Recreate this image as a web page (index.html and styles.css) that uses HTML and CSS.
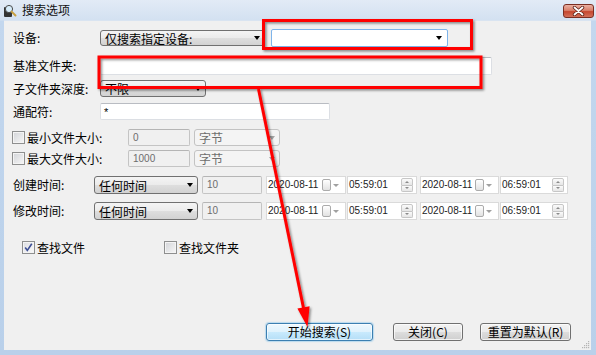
FILE: index.html
```html
<!DOCTYPE html>
<html>
<head>
<meta charset="utf-8">
<link rel="stylesheet" href="styles.css">
</head>
<body>
<div class="window">
  <div class="titlebar">
    <svg class="app-icon" width="14" height="15" viewBox="0 0 14 15">
      <rect x="1" y="4" width="8" height="10" rx="1" fill="#333"/>
      <circle cx="6" cy="6" r="3.6" fill="#d6ecfa" stroke="#4a4a4a" stroke-width="1"/>
      <line x1="8.6" y1="8.6" x2="12.5" y2="12.5" stroke="#c8a040" stroke-width="2" stroke-linecap="round"/>
    </svg>
    <span class="title">搜索选项</span>
    <div class="close">
      <svg width="13" height="10" viewBox="0 0 13 10">
        <path d="M2.5 1.5 L10.5 8.5 M10.5 1.5 L2.5 8.5" stroke="#5a2118" stroke-width="3.4" stroke-linecap="round"/>
        <path d="M2.5 1.5 L10.5 8.5 M10.5 1.5 L2.5 8.5" stroke="#fff" stroke-width="1.8" stroke-linecap="round"/>
      </svg>
    </div>
  </div>

  <div class="client">
    <div class="row r1">
      <span class="lbl lw87">设备:</span>
      <div class="dd dd-dev"><span>仅搜索指定设备:</span><i class="arr"></i></div>
      <div class="combo"><i class="arr"></i></div>
    </div>

    <div class="row r2">
      <span class="lbl lw87">基准文件夹:</span>
      <div class="edit w392"></div>
    </div>

    <div class="row r3">
      <span class="lbl lw87">子文件夹深度:</span>
      <div class="dd w106"><span>不限</span><i class="arr"></i></div>
    </div>

    <div class="row r4">
      <span class="lbl lw87">通配符:</span>
      <div class="edit w230 star">*</div>
    </div>

    <div class="row r5">
      <span class="cb"></span>
      <span class="lbl lw101 cbl">最小文件大小:</span>
      <div class="edit dis w62">0</div>
      <div class="dd dis w86 ml4"><span>字节</span><i class="arr"></i></div>
    </div>

    <div class="row r6">
      <span class="cb"></span>
      <span class="lbl lw101 cbl">最大文件大小:</span>
      <div class="edit dis w62">1000</div>
      <div class="dd dis w86 ml4"><span>字节</span><i class="arr"></i></div>
    </div>

    <div class="row r7">
      <span class="lbl lw81">创建时间:</span>
      <div class="dd w104 tall"><span>任何时间</span><i class="arr"></i></div>
      <div class="edit dis w60 ml4">10</div>
      <div class="dt w80 ml4"><span class="v">2020-08-11</span><span class="cal"></span><i class="sarr"></i></div>
      <div class="tm w70 ml1"><span class="v">05:59:01</span><span class="spin"><i class="sp up"></i><i class="sp dn"></i></span></div>
      <div class="dt w79 ml3"><span class="v">2020-08-11</span><span class="cal"></span><i class="sarr"></i></div>
      <div class="tm w68 ml1"><span class="v">06:59:01</span><span class="spin"><i class="sp up"></i><i class="sp dn"></i></span></div>
    </div>

    <div class="row r8">
      <span class="lbl lw81">修改时间:</span>
      <div class="dd w104 tall"><span>任何时间</span><i class="arr"></i></div>
      <div class="edit dis w60 ml4">10</div>
      <div class="dt w80 ml4"><span class="v">2020-08-11</span><span class="cal"></span><i class="sarr"></i></div>
      <div class="tm w70 ml1"><span class="v">05:59:01</span><span class="spin"><i class="sp up"></i><i class="sp dn"></i></span></div>
      <div class="dt w79 ml3"><span class="v">2020-08-11</span><span class="cal"></span><i class="sarr"></i></div>
      <div class="tm w68 ml1"><span class="v">06:59:01</span><span class="spin"><i class="sp up"></i><i class="sp dn"></i></span></div>
    </div>

    <div class="row r9">
      <div class="chk grp1">
        <span class="cb checked">
          <svg width="11" height="11" viewBox="0 0 11 11"><path d="M2.2 5.6 L4.3 8.4 L8.8 1.8" fill="none" stroke="#3d4f95" stroke-width="1.6"/></svg>
        </span>
        <span class="lbl cbl">查找文件</span>
      </div>
      <div class="chk">
        <span class="cb"></span>
        <span class="lbl cbl">查找文件夹</span>
      </div>
    </div>

    <div class="row btnrow">
      <div class="btn def w107">开始搜索(S)</div>
      <div class="btn w70 ml20">关闭(C)</div>
      <div class="btn w91 ml17">重置为默认(R)</div>
    </div>

    <svg class="grip" width="9" height="9" viewBox="0 0 9 9">
      <g fill="#b5b5b5">
        <rect x="7" y="1" width="1.2" height="1.2"/>
        <rect x="5" y="3" width="1.2" height="1.2"/><rect x="7" y="3" width="1.2" height="1.2"/>
        <rect x="3" y="5" width="1.2" height="1.2"/><rect x="5" y="5" width="1.2" height="1.2"/><rect x="7" y="5" width="1.2" height="1.2"/>
        <rect x="1" y="7" width="1.2" height="1.2"/><rect x="3" y="7" width="1.2" height="1.2"/><rect x="5" y="7" width="1.2" height="1.2"/><rect x="7" y="7" width="1.2" height="1.2"/>
      </g>
    </svg>
  </div>

  <svg class="annot" width="596" height="355" viewBox="0 0 596 355">
    <defs>
      <filter id="sh" x="-10%" y="-10%" width="120%" height="120%">
        <feDropShadow dx="1.5" dy="1.5" stdDeviation="1" flood-color="#000" flood-opacity="0.45"/>
      </filter>
    </defs>
    <g filter="url(#sh)">
      <rect x="263.5" y="20.5" width="208" height="28" fill="none" stroke="#ff0000" stroke-width="3"/>
      <rect x="99" y="57" width="382" height="30.5" fill="none" stroke="#ff0000" stroke-width="3"/>
      <line x1="258.5" y1="89" x2="303.5" y2="308" stroke="#ff0000" stroke-width="3"/>
      <polygon points="307.5,327 309.6,306.2 297.4,308.6" fill="#ff0000"/>
    </g>
  </svg>
</div>
</body>
</html>
```

FILE: styles.css
```css
* { box-sizing: border-box; }
html, body { margin: 0; padding: 0; }
body {
  width: 596px;
  height: 355px;
  overflow: hidden;
  background: #bdd3ec;
  font-family: "Liberation Sans", "Noto Sans CJK SC", sans-serif;
  font-size: 12px;
  color: #000;
}
.window {
  position: relative;
  width: 596px;
  height: 355px;
  display: flex;
  flex-direction: column;
  background: linear-gradient(180deg, #e2ebf6 0px, #d3e1f1 20px, #c3d7ee 21px, #b9d0ea 100%);
}
.titlebar {
  height: 20px;
  display: flex;
  align-items: flex-start;
  padding-left: 3px;
  flex: none;
}
.app-icon { margin-top: 3px; }
.title {
  margin-left: 5px;
  margin-top: 2px;
  font-family: "Noto Sans CJK SC", sans-serif;
  font-size: 12px;
  line-height: 16px;
  color: #111;
}
.close {
  margin-left: auto;
  margin-right: 2px;
  margin-top: 4px;
  width: 31px;
  height: 14px;
  border: 1px solid #7a2e22;
  border-radius: 3px;
  background: linear-gradient(180deg, #eab0a2 0%, #d9806b 45%, #c6472f 55%, #d2705a 100%);
  display: flex;
  align-items: center;
  justify-content: center;
}
.client {
  flex: 1;
  margin: 0 5px 5px 4px;
  background: #f0f0f0;
  position: relative;
  display: flex;
  flex-direction: column;
  border-top: 1px solid #d9e4f1;
}
.row {
  display: flex;
  align-items: center;
  height: 18px;
  padding-left: 9px;
  flex: none;
}
.r1 { margin-top: 8px; }
.r2 { margin-top: 10px; }
.r3 { margin-top: 5px; height: 17px; }
.r4 { margin-top: 6px; height: 17px; }
.r5 { margin-top: 9px; height: 17px; padding-left: 8px; }
.r6 { margin-top: 4px; height: 17px; padding-left: 8px; }
.r7 { margin-top: 9px; }
.r8 { margin-top: 8px; }
.r9 { margin-top: 21px; height: 13px; padding-left: 18px; }
.btnrow { margin-top: 69px; height: 18px; padding-left: 262px; }

.lbl {
  white-space: nowrap;
  font-family: "Noto Sans CJK SC", sans-serif;
  font-size: 12px;
  line-height: 16px;
}
.lw87 { width: 87px; flex: none; }
.lw81 { width: 81px; flex: none; }
.lw101 { width: 101px; flex: none; }
.cbl { margin-left: 2px; }

.w60 { width: 60px; } .w62 { width: 62px; } .w68 { width: 68px; } .w70 { width: 70px; }
.w79 { width: 79px; } .w80 { width: 80px; } .w86 { width: 86px; } .w91 { width: 91px; }
.w104 { width: 104px; } .w106 { width: 106px; } .w107 { width: 107px; }
.w230 { width: 230px; } .w392 { width: 392px; }
.ml1 { margin-left: 1px; } .ml3 { margin-left: 3px; } .ml4 { margin-left: 4px; }
.ml17 { margin-left: 17px; } .ml20 { margin-left: 20px; }

.dd {
  flex: none;
  height: 17px;
  border: 1px solid #707070;
  border-radius: 3px;
  background: linear-gradient(180deg, #f4f4f4 0%, #ebebeb 50%, #dedede 51%, #d2d2d2 100%);
  display: flex;
  align-items: center;
  justify-content: space-between;
  padding: 0 4px 0 4px;
  font-family: "Noto Sans CJK SC", sans-serif;
  font-size: 12px;
  line-height: 15px;
  white-space: nowrap;
}
.dd-dev { width: 165px; height: 16px; }
.dd.tall { height: 18px; }
.arr {
  display: block;
  width: 0;
  height: 0;
  border-left: 3.5px solid transparent;
  border-right: 3.5px solid transparent;
  border-top: 4px solid #000;
}
.dd.dis {
  background: #f4f4f4;
  border-color: #c3c3c3;
  color: #6d6d6d;
}
.dd.dis .arr { border-top-color: #a5a5a5; }

.combo {
  flex: none;
  width: 177px;
  height: 18px;
  margin-left: 6px;
  background: #fff;
  border: 1px solid #7eb4ea;
  border-radius: 2px;
  display: flex;
  align-items: center;
  justify-content: flex-end;
  padding-right: 5px;
}
.edit {
  flex: none;
  height: 18px;
  background: #fff;
  border: 1px solid #dcdfe4;
  border-top-color: #b9bcc2;
  border-radius: 2px;
  font-size: 10px;
  line-height: 16px;
  padding-left: 4px;
}
.r4 .edit { height: 17px; }
.star { padding-left: 3px; font-size: 11px; line-height: 17px; }
.edit.dis {
  background: #f0f0f0;
  color: #6d6d6d;
  border-color: #c4c4c4;
  border-top-color: #b5b5b5;
}
.r5 .edit, .r6 .edit { height: 17px; }
.r5 .dd, .r6 .dd { height: 17px; }

.dt, .tm {
  flex: none;
  height: 18px;
  background: #fff;
  border: 1px solid #dadada;
  display: flex;
  align-items: center;
  font-size: 10px;
  line-height: 16px;
  padding-left: 1px;
  color: #222;
}
.v { white-space: nowrap; }
.cal {
  margin-left: auto;
  width: 9px;
  height: 12px;
  border: 1px solid #ababab;
  border-radius: 2px;
  background: linear-gradient(180deg, #ffffff, #e2e2e2);
}
.sarr {
  display: block;
  width: 0;
  height: 0;
  margin-left: 2px;
  margin-right: 6px;
  border-left: 3px solid transparent;
  border-right: 3px solid transparent;
  border-top: 3px solid #a0a0a0;
}
.spin {
  margin-left: auto;
  margin-right: 3px;
  width: 12px;
  height: 14px;
  display: flex;
  flex-direction: column;
}
.sp {
  flex: 1;
  border: 1px solid #c6c6c6;
  background: linear-gradient(180deg, #fbfbfb, #e6e6e6);
  position: relative;
  display: flex;
  align-items: center;
  justify-content: center;
}
.sp.up { border-radius: 2px 2px 0 0; }
.sp.dn { border-top: none; border-radius: 0 0 2px 2px; }
.sp.up::after {
  content: "";
  border-left: 2px solid transparent;
  border-right: 2px solid transparent;
  border-bottom: 2px solid #8a8a8a;
}
.sp.dn::after {
  content: "";
  border-left: 2px solid transparent;
  border-right: 2px solid transparent;
  border-top: 2px solid #8a8a8a;
}

.cb {
  flex: none;
  width: 13px;
  height: 13px;
  border: 1px solid #8e8f8f;
  background: linear-gradient(135deg, #d2d4d8 0%, #f7f7f7 100%);
  box-shadow: inset 0 0 0 1px #f4f4f4;
  display: flex;
  align-items: center;
  justify-content: center;
}
.cb.checked { background: linear-gradient(135deg, #dcdde2 0%, #fbfbfb 100%); }
.chk { display: flex; align-items: center; }
.grp1 { width: 142px; }

.btn {
  flex: none;
  height: 18px;
  border: 1px solid #707070;
  border-radius: 3px;
  background: linear-gradient(180deg, #f2f2f2 0%, #ebebeb 50%, #dddddd 51%, #cfcfcf 100%);
  box-shadow: inset 0 0 0 1px rgba(255,255,255,0.7);
  display: flex;
  align-items: center;
  justify-content: center;
  font-family: "Noto Sans CJK SC", sans-serif;
  font-size: 12px;
  line-height: 16px;
  white-space: nowrap;
}
.btn.def {
  border-color: #3c7fb1;
  background: linear-gradient(180deg, #eef8fe 0%, #dff2fd 50%, #c8eafd 51%, #b5def7 100%);
  box-shadow: inset 0 0 0 1px rgba(255,255,255,0.6), 0 0 1px 1px rgba(120,190,235,0.45);
}

.grip { position: absolute; right: 1px; bottom: 1px; }

.annot {
  position: absolute;
  left: 0;
  top: 0;
  pointer-events: none;
}
```
